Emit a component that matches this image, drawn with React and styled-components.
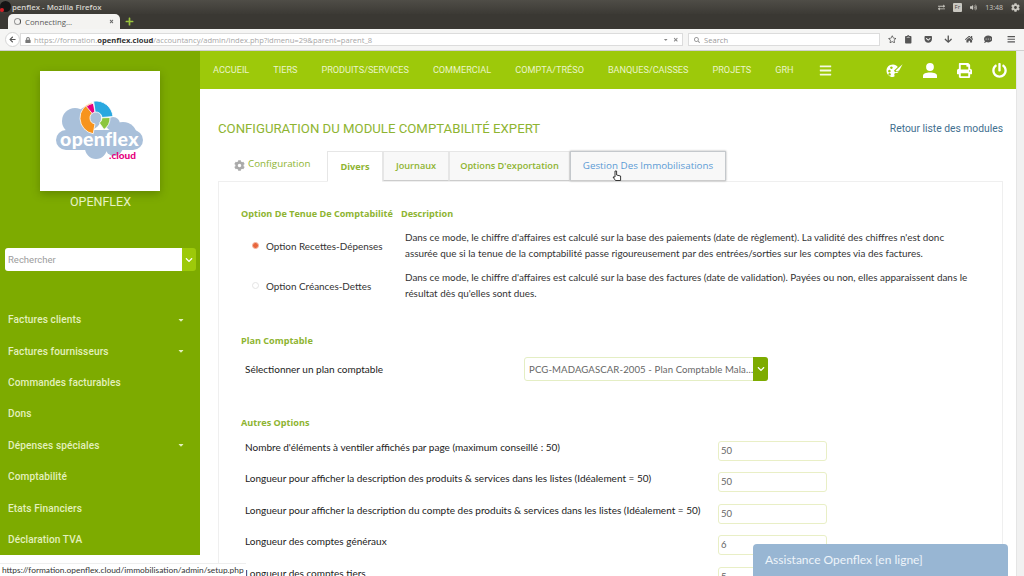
import styled, { createGlobalStyle } from "styled-components";
import {
  FaArrowLeft,
  FaArrowDown,
  FaBars,
  FaChevronDown,
  FaCog,
  FaCommentDots,
  FaGetPocket,
  FaHome,
  FaLock,
  FaPowerOff,
  FaPrint,
  FaRegStar,
  FaSearch,
  FaTimes,
  FaVolumeUp,
  FaClipboard,
  FaCaretDown,
  FaPlus,
  FaExchangeAlt,
} from "react-icons/fa";

const GlobalStyle = createGlobalStyle`
  html, body { margin: 0; padding: 0; background: #fff; }
  * { box-sizing: border-box; }
  body { font-family: Lato, "Liberation Sans", sans-serif; overflow: hidden; }
`;

const Screen = styled.div`
  width: 1024px;
  height: 576px;
  position: relative;
  overflow: hidden;
  display: flex;
  flex-direction: column;
  background: #fff;
`;

/* --- desktop + firefox chrome --- */
const TitleBar = styled.div`
  height: 14px;
  flex: none;
  background: linear-gradient(#4f4d47, #3c3a35);
  display: flex;
  align-items: center;
  padding: 0 4px 0 12px;
  color: #d8d6cf;
  font-family: "Open Sans", sans-serif;
  font-size: 7.8px;
  font-weight: 600;
  position: relative;
`;

const WinBadge = styled.span`
  position: absolute;
  left: 0;
  top: 1px;
  width: 11px;
  height: 11px;
  border-radius: 50%;
  background: #151515;
  &::after {
    content: "";
    position: absolute;
    left: 0;
    bottom: 0;
    width: 4px;
    height: 4px;
    border-radius: 50%;
    background: #d81f26;
  }
`;

const Tray = styled.div`
  margin-left: auto;
  display: flex;
  align-items: center;
  gap: 8px;
  color: #c9c7c0;
  font-size: 7px;
  font-weight: 400;
`;

const LangBox = styled.span`
  background: #c9c7c0;
  color: #4a4843;
  font-size: 6px;
  padding: 0 2px;
  line-height: 9px;
  border-radius: 1px;
`;

const TabBar = styled.div`
  height: 15px;
  flex: none;
  background: #3a3833;
  display: flex;
  align-items: flex-end;
  padding-left: 8px;
  gap: 5px;
`;

const BrowserTab = styled.div`
  width: 112px;
  height: 15px;
  background: #f4f3f1;
  border-radius: 5px 5px 0 0;
  display: flex;
  align-items: center;
  padding: 0 6px;
  gap: 4px;
  font-family: "Open Sans", sans-serif;
  font-size: 7.8px;
  color: #5a5a5a;
`;

const Spinner = styled.span`
  width: 7px;
  height: 7px;
  border-radius: 50%;
  border: 1px solid #9a9a9a;
  border-right-color: #444;
`;

const TabClose = styled.span`
  margin-left: auto;
  display: flex;
  color: #666;
  font-size: 5px;
`;

const NewTab = styled.span`
  display: flex;
  color: #9bc53d;
  font-size: 9px;
  margin-bottom: 3px;
`;

const NavToolbar = styled.div`
  height: 22px;
  flex: none;
  background: #f5f5f4;
  border-bottom: 1px solid #d0d0d0;
  display: flex;
  align-items: center;
  padding: 0 5px;
  gap: 5px;
`;

const BackBtn = styled.span`
  width: 15px;
  height: 15px;
  border-radius: 50%;
  background: #fff;
  border: 1px solid #d5d5d5;
  display: flex;
  align-items: center;
  justify-content: center;
  color: #555;
  font-size: 7px;
  flex: none;
`;

const UrlBox = styled.div`
  height: 13px;
  flex: none;
  background: #fff;
  border: 1px solid #dcdcdc;
  display: flex;
  align-items: center;
  padding: 0 4px;
  gap: 3px;
  width: 663px;
  margin-left: -5px;
  font-family: "Open Sans", sans-serif;
  font-size: 7.6px;
  color: #a6a6a6;
  white-space: nowrap;
  b {
    color: #333;
    font-weight: 700;
  }
`;

const UrlActions = styled.span`
  margin-left: auto;
  display: flex;
  align-items: center;
  gap: 4px;
  color: #888;
  font-size: 5.5px;
`;

const SearchBox = styled(UrlBox)`
  width: 192px;
  margin-left: 0;
  padding-left: 5px;
  gap: 4px;
  color: #999;
  font-size: 7.6px;
`;

const ToolIcons = styled.div`
  display: flex;
  align-items: center;
  margin-left: 1px;
  color: #555;
  font-size: 8.5px;
`;

const ToolSlot = styled.span`
  width: 12px;
  flex: none;
  display: flex;
  justify-content: center;
  margin-right: ${(p) => p.$mr || 0}px;
`;

/* --- page --- */
const Page = styled.div`
  flex: 1;
  display: flex;
  min-height: 0;
`;

const Sidebar = styled.aside`
  width: 200px;
  height: 504px;
  flex: none;
  background: #7dab00;
  padding: 20px 4px 0 5px;
  display: flex;
  flex-direction: column;
`;

const LogoCard = styled.div`
  width: 120px;
  height: 120px;
  flex: none;
  align-self: center;
  margin-left: -1px;
  background: #fff;
  box-shadow: 0 3px 8px rgba(50, 70, 0, 0.35);
  display: flex;
  align-items: center;
  justify-content: center;
`;

const BrandName = styled.div`
  text-align: center;
  color: #e6f2c4;
  font-family: Roboto, sans-serif;
  font-size: 12.5px;
  height: 21px;
  padding-top: 1px;
  line-height: 20px;
  flex: none;
`;

const SearchRow = styled.div`
  margin-top: 36px;
  width: 191px;
  height: 23px;
  flex: none;
  display: flex;
  border-radius: 3px;
  overflow: hidden;
`;

const SearchInput = styled.div`
  flex: 1;
  background: #fff;
  color: #9c9c9c;
  font-family: Roboto, sans-serif;
  font-size: 9.5px;
  padding-left: 3px;
  line-height: 23px;
`;

const SearchBtn = styled.div`
  width: 14px;
  background: #9dc90a;
  color: #fff;
  font-size: 8px;
  display: flex;
  align-items: center;
  justify-content: center;
`;

const SideMenu = styled.nav`
  margin-top: 33px;
  margin-left: -5px;
  display: flex;
  flex-direction: column;
`;

const SideItem = styled.div`
  height: 31.4px;
  flex: none;
  display: flex;
  align-items: center;
  justify-content: space-between;
  padding: 0 11px 0 8px;
  color: #e3f0bd;
  font-family: Roboto, sans-serif;
  font-weight: 500;
  font-size: 10.1px;
  letter-spacing: 0.1px;
  svg {
    font-size: 8px;
  }
`;

const Main = styled.main`
  flex: 1;
  min-width: 0;
  display: flex;
  flex-direction: column;
`;

const TopBar = styled.div`
  height: 38px;
  flex: none;
  background: #9dc90a;
  display: flex;
  align-items: center;
  padding-left: 13px;
  color: #eaf4c8;
  font-family: Roboto, sans-serif;
  font-size: 9.15px;
`;

const TopLink = styled.a`
  margin-right: 24px;
  white-space: nowrap;
`;

const BarsIcon = styled.span`
  display: flex;
  font-size: 13px;
  margin-left: 1px;
  color: #f4f9e2;
`;

const TopIcons = styled.div`
  margin-left: auto;
  margin-right: 9px;
  display: flex;
  gap: 20px;
  align-items: center;
  color: #fff;
  font-size: 15px;
`;

const ContentArea = styled.div`
  flex: 1;
  min-height: 0;
  padding: 31px 13px 0 18px;
  overflow: hidden;
`;

const TitleRow = styled.div`
  display: flex;
  align-items: center;
  justify-content: space-between;
  height: 16px;
`;

const PageTitle = styled.h1`
  margin: 0;
  font-family: Roboto, sans-serif;
  font-weight: 400;
  font-size: 13.2px;
  color: #8eb431;
`;

const BackLink = styled.a`
  font-family: Roboto, sans-serif;
  font-weight: 400;
  font-size: 10.3px;
  color: #3f6f8f;
`;

const TabStrip = styled.div`
  margin-top: 14px;
  display: flex;
  align-items: flex-end;
  height: 31px;
  padding-left: 16px;
  position: relative;
  z-index: 1;
`;

const PlainTab = styled.div`
  width: 93px;
  height: 31px;
  flex: none;
  display: flex;
  align-items: center;
  gap: 3px;
  color: #8eb431;
  font-family: "Open Sans", sans-serif;
  font-size: 9.8px;
  padding-bottom: 5px;
`;

const GearIcon = styled.span`
  display: flex;
  color: #aaa;
  font-size: 11px;
  margin-top: 4px;
`;

const Tab = styled.div`
  height: ${(p) => (p.$active ? "31px" : "30px")};
  width: ${(p) => p.$w}px;
  flex: none;
  display: flex;
  align-items: center;
  justify-content: center;
  padding-bottom: 1px;
  font-family: "Open Sans", sans-serif;
  font-size: ${(p) => (p.$hover ? "9.8px" : "9.2px")};
  font-weight: ${(p) => (p.$active ? 700 : p.$hover ? 400 : 600)};
  color: ${(p) => (p.$hover ? "#5b9bd5" : "#8eb431")};
  background: ${(p) => (p.$active ? "#fff" : "#f8f8f8")};
  border: 1px solid ${(p) => (p.$hover ? "#c4c8cc" : "#e6e6e6")};
  border-bottom: ${(p) => (p.$active ? "1px solid #fff" : "1px solid #ccc")};
  margin-bottom: ${(p) => (p.$active ? "-1px" : "0")};
  box-shadow: ${(p) => (p.$hover ? "0 0 2px #aaa" : "none")};
`;

const Card = styled.div`
  border: 1px solid #efefef;
  border-bottom: none;
  height: 420px;
  padding: 25px 26px 0 22px;
`;

const HeadRow = styled.div`
  display: flex;
  gap: 8px;
  height: 14px;
  align-items: center;
`;

const SectionTitle = styled.div`
  font-family: "Open Sans", sans-serif;
  font-weight: 700;
  font-size: 9.1px;
  color: #8eb431;
  white-space: nowrap;
  line-height: 12px;
  margin-top: ${(p) => p.$mt || 0}px;
  margin-bottom: ${(p) => p.$mb || 0}px;
`;

const OptionRow = styled.div`
  display: grid;
  grid-template-columns: 164px 1fr;
  margin-top: ${(p) => p.$mt}px;
  align-items: center;
`;

const OptionLabel = styled.div`
  display: flex;
  align-items: center;
  padding-left: 11px;
  gap: 7px;
  font-size: 9.9px;
  color: #333;
  white-space: nowrap;
`;

const Radio = styled.span`
  width: 7px;
  height: 7px;
  border-radius: 50%;
  flex: none;
  background: ${(p) => (p.$on ? "#e8663d" : "#fff")};
  border: 1px solid ${(p) => (p.$on ? "#f5b9a5" : "#e4e4e4")};
`;

const OptionDesc = styled.div`
  font-size: 9.9px;
  line-height: 15.5px;
  color: #333;
  white-space: nowrap;
`;

const SelectRow = styled.div`
  display: flex;
  align-items: center;
  margin-top: 10px;
  padding-left: 4px;
  height: 24px;
  font-size: 10px;
  color: #222;
  white-space: nowrap;
`;

const SelectBox = styled.div`
  margin-left: 141px;
  width: 244px;
  height: 24px;
  flex: none;
  border: 1px solid #e4eec4;
  border-radius: 3px;
  display: flex;
  align-items: center;
  padding-left: 4px;
  color: #666;
  font-size: 9.6px;
  letter-spacing: 0.1px;
  position: relative;
`;

const SelectBtn = styled.span`
  position: absolute;
  right: -1px;
  top: -1px;
  bottom: -1px;
  width: 15px;
  background: #7dab00;
  border-radius: 0 3px 3px 0;
  color: #fff;
  font-size: 8px;
  display: flex;
  align-items: center;
  justify-content: center;
`;

const FieldRow = styled.div`
  display: flex;
  align-items: flex-start;
  height: 19px;
  margin-top: 12.5px;
  padding-left: 4px;
  width: 586px;
  font-size: 10px;
  line-height: 12px;
  color: #222;
  white-space: nowrap;
`;

const NumInput = styled.div`
  width: 109px;
  height: 20px;
  flex: none;
  border: 1px solid #e9efc6;
  border-radius: 3px;
  padding-left: 2px;
  line-height: 18px;
  color: #666;
  font-size: 9.5px;
  margin-left: auto;
`;

const Scrollbar = styled.div`
  width: 8px;
  flex: none;
  background: #f1f1f1;
  border-left: 1px solid #e5e5e5;
`;

/* overlays */
const StatusBar = styled.div`
  position: absolute;
  left: 0;
  bottom: 0;
  height: 13px;
  width: 246px;
  z-index: 2;
  background: #fff;
  border-top: 1px solid #eee;
  padding-left: 2px;
  font-size: 8.4px;
  line-height: 12px;
  color: #333;
  white-space: nowrap;
`;

const ChatWidget = styled.div`
  position: absolute;
  left: 753px;
  bottom: 0;
  z-index: 2;
  width: 255px;
  height: 32px;
  background: #98b6d3;
  border-radius: 4px 4px 0 0;
  color: #eef4fa;
  font-size: 12px;
  line-height: 32px;
  padding-left: 12px;
`;

const Cursor = styled.svg`
  position: absolute;
  left: 612px;
  top: 170px;
  z-index: 3;
  width: 10px;
  height: 12px;
`;

const menuTop = ["ACCUEIL", "TIERS", "PRODUITS/SERVICES", "COMMERCIAL", "COMPTA/TRÉSO", "BANQUES/CAISSES", "PROJETS", "GRH"];

const sideItems = [
  ["Factures clients", true],
  ["Factures fournisseurs", true],
  ["Commandes facturables"],
  ["Dons"],
  ["Dépenses spéciales", true],
  ["Comptabilité"],
  ["Etats Financiers"],
  ["Déclaration TVA"],
];

const fields = [
  ["Nombre d'éléments à ventiler affichés par page (maximum conseillé : 50)", "50"],
  ["Longueur pour afficher la description des produits & services dans les listes (Idéalement = 50)", "50"],
  ["Longueur pour afficher la description du compte des produits & services dans les listes (Idéalement = 50)", "50"],
  ["Longueur des comptes généraux", "6"],
  ["Longueur des comptes tiers", "5"],
];

// ring segment for the logo donut, angles in degrees, 0 = up, clockwise
const ring = (cx, cy, r0, r1, a0, a1) => {
  const pt = (r, a) => {
    const t = ((a - 90) * Math.PI) / 180;
    return `${(cx + r * Math.cos(t)).toFixed(2)} ${(cy + r * Math.sin(t)).toFixed(2)}`;
  };
  const large = a1 - a0 > 180 ? 1 : 0;
  return `M${pt(r1, a0)} A${r1} ${r1} 0 ${large} 1 ${pt(r1, a1)} L${pt(r0, a1)} A${r0} ${r0} 0 ${large} 0 ${pt(r0, a0)} Z`;
};

const Logo = () => (
  <svg width="88" height="60" viewBox="0 0 88 60">
    <g fill="#a9c0da">
      <circle cx="19" cy="20" r="13" />
      <circle cx="33" cy="17" r="12" />
      <circle cx="57" cy="23" r="7" />
      <circle cx="67" cy="35" r="14" />
      <circle cx="40" cy="47" r="11" />
      <circle cx="58" cy="46" r="9" />
      <rect x="0" y="29" width="87" height="20" rx="10" />
    </g>
    <path d={ring(40, 17, 6, 16, 190, 345)} fill="#f7941d" stroke="#fff" strokeWidth="0.8" />
    <path d={ring(40, 17, 6, 15, 320, 350)} fill="#e6007e" stroke="#fff" strokeWidth="0.8" />
    <path d={ring(40, 17, 6, 17, -8, 85)} fill="#29a8e0" stroke="#fff" strokeWidth="0.8" />
    <path d={ring(40, 17, 6, 14, 88, 145)} fill="#8cc63f" stroke="#fff" strokeWidth="0.8" />
    <text x="43.5" y="45" textAnchor="middle" fontFamily="Lato, sans-serif" fontWeight="900" fontSize="19.5" letterSpacing="0.3" fill="#fff">openflex</text>
    <text x="66.5" y="58" textAnchor="middle" fontFamily="Lato, sans-serif" fontWeight="900" fontSize="10" fill="#e6007e">.cloud</text>
  </svg>
);

const PaletteIcon = () => (
  <svg width="17" height="15" viewBox="0 0 17 15" fill="currentColor">
    <path
      fillRule="evenodd"
      d="M7 1.5 C3 1.5 .5 4.3 .5 7.7 C.5 11.4 3.4 14 6.8 14 C8.4 14 8.9 13 8.4 12 C7.9 11 8.5 10 9.8 10 C11.2 10 12.3 9.6 12.6 8.4 L9 9.2 L8 7.6 L11.8 4 C10.8 2.4 9 1.5 7 1.5 Z M3.4 6.8 a1.3 1.3 0 1 0 .01 0 Z M5.4 3.4 a1.3 1.3 0 1 0 .01 0 Z M3.6 10 a1.3 1.3 0 1 0 .01 0 Z"
    />
    <path d="M9.6 7.6 L16.6 1.2 L13.2 7.4 L10.6 8.6 Z" />
  </svg>
);

const UserIcon = () => (
  <svg width="14" height="15" viewBox="0 0 14 15" fill="currentColor">
    <circle cx="7" cy="4" r="3.9" />
    <path d="M0 15 V12.6 C0 10.4 3 9.4 7 9.4 S14 10.4 14 12.6 V15 Z" />
  </svg>
);

const App = () => (
  <Screen>
    <GlobalStyle />
    <TitleBar>
      <WinBadge />
      penflex - Mozilla Firefox
      <Tray>
        <FaExchangeAlt />
        <LangBox>Fr</LangBox>
        <FaVolumeUp />
        <span>13:48</span>
        <FaCog style={{ fontSize: 9 }} />
      </Tray>
    </TitleBar>
    <TabBar>
      <BrowserTab>
        <Spinner />
        Connecting…
        <TabClose><FaTimes /></TabClose>
      </BrowserTab>
      <NewTab><FaPlus /></NewTab>
    </TabBar>
    <NavToolbar>
      <BackBtn><FaArrowLeft /></BackBtn>
      <UrlBox>
        <FaLock style={{ color: "#777", fontSize: 6 }} />
        <span>https://formation.<b>openflex.cloud</b>/accountancy/admin/index.php?idmenu=29&amp;parent=parent_8</span>
        <UrlActions><FaCaretDown /><FaTimes /></UrlActions>
      </UrlBox>
      <SearchBox><FaSearch style={{ fontSize: 6 }} />Search</SearchBox>
      <ToolIcons>
        <ToolSlot $mr={4}><FaRegStar /></ToolSlot>
        <ToolSlot $mr={8}><FaClipboard /></ToolSlot>
        <ToolSlot $mr={8}><FaGetPocket /></ToolSlot>
        <ToolSlot $mr={9}><FaArrowDown /></ToolSlot>
        <ToolSlot $mr={7}><FaHome /></ToolSlot>
        <ToolSlot $mr={11}><FaCommentDots /></ToolSlot>
        <ToolSlot><FaBars /></ToolSlot>
      </ToolIcons>
    </NavToolbar>
    <Page>
      <Sidebar>
        <LogoCard><Logo /></LogoCard>
        <BrandName>OPENFLEX</BrandName>
        <SearchRow>
          <SearchInput>Rechercher</SearchInput>
          <SearchBtn><FaChevronDown /></SearchBtn>
        </SearchRow>
        <SideMenu>
          {sideItems.map(([label, caret]) => (
            <SideItem key={label}>
              {label}
              {caret && <FaCaretDown />}
            </SideItem>
          ))}
        </SideMenu>
      </Sidebar>
      <Main>
        <TopBar>
          {menuTop.map((m) => <TopLink key={m}>{m}</TopLink>)}
          <BarsIcon><FaBars /></BarsIcon>
          <TopIcons>
            <PaletteIcon />
            <UserIcon />
            <FaPrint />
            <FaPowerOff />
          </TopIcons>
        </TopBar>
        <ContentArea>
          <TitleRow>
            <PageTitle>CONFIGURATION DU MODULE COMPTABILITÉ EXPERT</PageTitle>
            <BackLink>Retour liste des modules</BackLink>
          </TitleRow>
          <TabStrip>
            <PlainTab><GearIcon><FaCog /></GearIcon>Configuration</PlainTab>
            <Tab $active $w={56}>Divers</Tab>
            <Tab $w={66}>Journaux</Tab>
            <Tab $w={121}>Options D'exportation</Tab>
            <Tab $hover $w={156}>Gestion Des Immobilisations</Tab>
          </TabStrip>
          <Card>
            <HeadRow>
              <SectionTitle>Option De Tenue De Comptabilité</SectionTitle>
              <SectionTitle>Description</SectionTitle>
            </HeadRow>
            <OptionRow $mt={9}>
              <OptionLabel><Radio $on />Option Recettes-Dépenses</OptionLabel>
              <OptionDesc>
                Dans ce mode, le chiffre d'affaires est calculé sur la base des paiements (date de règlement). La validité des chiffres n'est donc<br />
                assurée que si la tenue de la comptabilité passe rigoureusement par des entrées/sorties sur les comptes via des factures.
              </OptionDesc>
            </OptionRow>
            <OptionRow $mt={9}>
              <OptionLabel><Radio />Option Créances-Dettes</OptionLabel>
              <OptionDesc>
                Dans ce mode, le chiffre d'affaires est calculé sur la base des factures (date de validation). Payées ou non, elles apparaissent dans le<br />
                résultat dès qu'elles sont dues.
              </OptionDesc>
            </OptionRow>
            <SectionTitle $mt={34}>Plan Comptable</SectionTitle>
            <SelectRow>
              Sélectionner un plan comptable
              <SelectBox>
                PCG-MADAGASCAR-2005 - Plan Comptable Mala…
                <SelectBtn><FaChevronDown /></SelectBtn>
              </SelectBox>
            </SelectRow>
            <SectionTitle $mt={36} $mb={-1}>Autres Options</SectionTitle>
            {fields.map(([label, value]) => (
              <FieldRow key={label}>
                {label}
                <NumInput>{value}</NumInput>
              </FieldRow>
            ))}
          </Card>
        </ContentArea>
      </Main>
      <Scrollbar />
    </Page>
    <StatusBar>https://formation.openflex.cloud/immobilisation/admin/setup.php</StatusBar>
    <ChatWidget>Assistance Openflex [en ligne]</ChatWidget>
    <Cursor viewBox="0 0 10 12">
      <path d="M3 1 L4.6 1 L4.6 5 L8.6 6 L8.6 10.5 L3.5 10.5 L1 7 L3 7 Z" fill="#fff" stroke="#222" strokeWidth="0.9" />
    </Cursor>
  </Screen>
);

export default App;
